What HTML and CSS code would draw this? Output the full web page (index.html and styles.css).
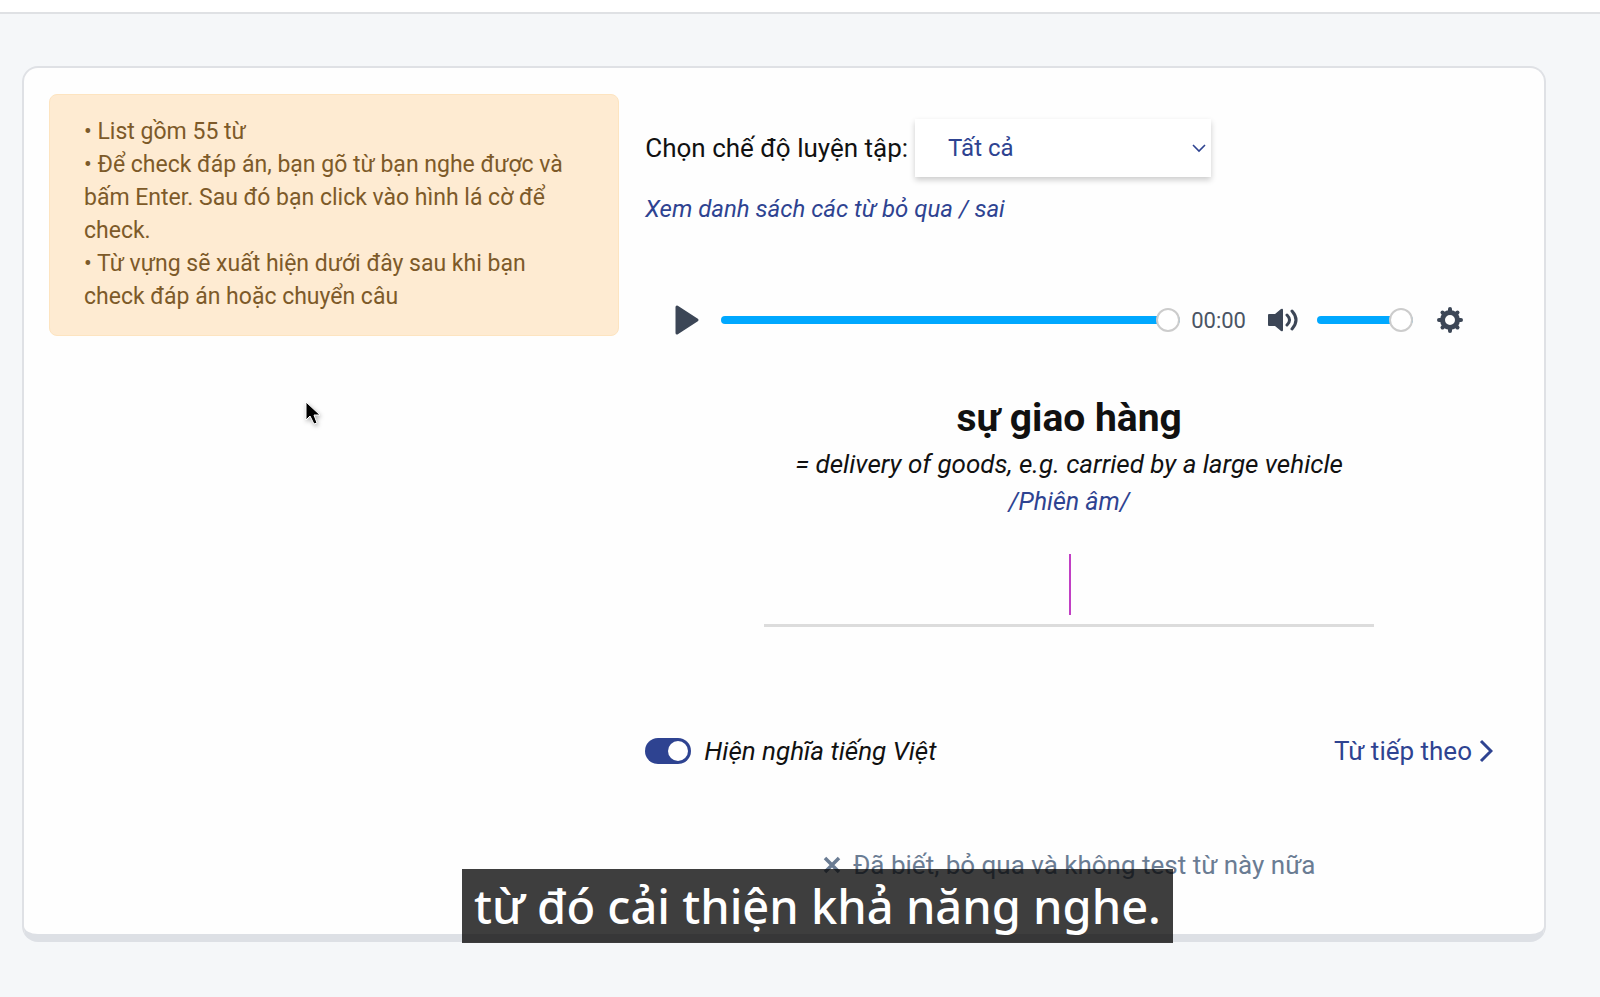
FILE: index.html
```html
<!DOCTYPE html>
<html lang="vi">
<head>
    <meta charset="UTF-8">
    <meta name="viewport" content="width=device-width, initial-scale=1.0">
    <title>Luyện nghe từ vựng</title>
    <link rel="stylesheet" href="styles.css">
</head>
<body>
    <header class="topbar"></header>

    <main class="card">
        <aside class="notes">
            <div>• List gồm 55 từ</div>
            <div>• Để check đáp án, bạn gõ từ bạn nghe được và bấm Enter. Sau đó bạn click vào hình lá cờ để check.</div>
            <div>• Từ vựng sẽ xuất hiện dưới đây sau khi bạn check đáp án hoặc chuyển câu</div>
        </aside>

        <section class="practice">
            <div class="mode">
                <label for="mode">Chọn chế độ luyện tập:</label>
                <div class="select-box">
                    <select id="mode">
                        <option>Tất cả</option>
                    </select>
                    <svg class="select-arrow" width="14" height="9" viewBox="0 0 14 9"><path d="M1 1l6 6 6-6" fill="none" stroke="currentColor" stroke-width="1.6"/></svg>
                </div>
            </div>
            <a class="list-link" href="#">Xem danh sách các từ bỏ qua / sai</a>

            <div class="player">
                <button class="icon-button" type="button" aria-label="Play">
                    <svg width="24" height="30" viewBox="0 0 24 30"><path d="M2 2v26l20-13z" fill="currentColor" stroke="currentColor" stroke-width="3" stroke-linejoin="round"/></svg>
                </button>
                <input class="slider seek" type="range" min="0" max="100" value="100" aria-label="Seek">
                <span class="time">00:00</span>
                <button class="icon-button volume-button" type="button" aria-label="Mute">
                    <svg width="30" height="24" viewBox="0 0 30 24">
                        <path d="M1 6h6l6-5q2-1 2 1v20q0 2-2 1l-6-5H1q-1 0-1-1V7q0-1 1-1z" fill="currentColor"/>
                        <path d="M19 7q5 5 0 10M24 3q8 9 0 18" fill="none" stroke="currentColor" stroke-width="3" stroke-linecap="round"/>
                    </svg>
                </button>
                <input class="slider volume" type="range" min="0" max="100" value="100" aria-label="Volume">
                <button class="icon-button settings" type="button" aria-label="Settings">
                    <svg width="26" height="26" viewBox="0 0 26 26">
                        <path d="M13 2v3M13 21v3M2 13h3M21 13h3M5.5 5.5l2 2M18.5 18.5l2 2M20.5 5.5l-2 2M7.5 18.5l-2 2" stroke="currentColor" stroke-width="4" stroke-linecap="round"/>
                        <circle cx="13" cy="13" r="7.5" fill="none" stroke="currentColor" stroke-width="5"/>
                    </svg>
                </button>
            </div>

            <div class="word">
                <h1>sự giao hàng</h1>
                <p class="meaning">= delivery of goods, e.g. carried by a large vehicle</p>
                <p class="phonetic">/Phiên âm/</p>
            </div>

            <div class="answer">
                <input type="text" aria-label="Đáp án" autocomplete="off">
                <span class="caret"></span>
            </div>

            <div class="controls">
                <label class="toggle">
                    <input type="checkbox" checked>
                    Hiện nghĩa tiếng Việt
                </label>
                <button class="next" type="button">Từ tiếp theo
                    <svg width="14" height="24" viewBox="0 0 14 24"><path d="M2 2l10 10L2 22" fill="none" stroke="currentColor" stroke-width="3"/></svg>
                </button>
            </div>

            <button class="skip" type="button">
                <svg width="18" height="18" viewBox="0 0 18 18"><path d="M2 2l14 14M16 2L2 16" stroke="currentColor" stroke-width="3.5"/></svg>
                Đã biết, bỏ qua và không test từ này nữa
            </button>
        </section>
    </main>

    <div class="subtitle">từ đó cải thiện khả năng nghe.</div>

    <svg class="pointer" width="18" height="28" viewBox="0 0 18 28"><path d="M2 2v18l4-4 4 8 3-1-3-8h6z" fill="#000" stroke="#fff" stroke-width="1"/></svg>
</body>
</html>
```
FILE: styles.css
```css
* {
    box-sizing: border-box;
}

body {
    margin: 0;
    min-height: 100vh;
    background-color: #f5f7f9;
    font-family: Roboto, sans-serif;
    font-size: 26px;
    color: #111;
}

button,
select,
input {
    margin: 0;
    padding: 0;
    border: none;
    background: none;
    font: inherit;
    color: inherit;
}

button {
    cursor: pointer;
}

.topbar {
    height: 14px;
    background: #fff;
    border-bottom: 2px solid #dfe1e4;
}

.card {
    display: grid;
    grid-template-columns: 37fr 55fr;
    gap: 26px;
    align-items: start;
    margin: 52px 54px 0 22px;
    padding: 26px 51px 49px 25px;
    background: #fefefe;
    border: 2px solid #dfe1e5;
    border-bottom: 8px solid #dde0e5;
    border-radius: 16px;
}

.notes {
    padding: 20px 34px 22px;
    background: #feebd2;
    border: 1px solid #fde4c0;
    border-radius: 8px;
    font-size: 23px;
    line-height: 33px;
    color: #7d5a29;
}

.practice {
    display: flex;
    flex-direction: column;
    padding-top: 25px;
}

.mode {
    display: flex;
    align-items: center;
    gap: 7px;
}

.select-box {
    position: relative;
    width: 296px;
    height: 58px;
    background: #fff;
    box-shadow: 0 3px 6px rgba(0, 0, 0, 0.2);
}

.select-box select {
    width: 100%;
    height: 100%;
    padding-left: 33px;
    appearance: none;
    font-size: 24px;
    color: #2e4391;
}

.select-arrow {
    position: absolute;
    right: 5px;
    top: 25px;
    color: #2e4391;
    pointer-events: none;
}

.list-link {
    align-self: flex-start;
    margin-top: 16px;
    font-size: 24px;
    line-height: 32px;
    font-style: italic;
    color: #2e4391;
    text-decoration: none;
}

.player {
    display: flex;
    align-items: center;
    height: 40px;
    margin-top: 75px;
    padding: 0 30px;
    color: #3c4656;
}

.icon-button {
    display: flex;
}

.slider {
    appearance: none;
    min-width: 0;
    height: 24px;
}

.slider::-webkit-slider-runnable-track {
    height: 8px;
    border-radius: 4px;
    background: #00a8ff;
}

.slider::-webkit-slider-thumb {
    appearance: none;
    width: 24px;
    height: 24px;
    margin-top: -8px;
    border: 2px solid #ccc;
    border-radius: 50%;
    background: #fff;
}

.seek {
    flex: 1;
    margin-left: 22px;
}

.time {
    margin-left: 11px;
    font-size: 22px;
    color: #4a5464;
}

.volume-button {
    margin-left: 22px;
}

.volume {
    width: 96px;
    margin-left: 19px;
}

.settings {
    margin-left: 24px;
}

.word {
    margin-top: 54px;
    text-align: center;
}

.word h1 {
    margin: 0;
    font-size: 39px;
    line-height: 48px;
}

.word p {
    margin: 0;
    line-height: 37px;
    font-style: italic;
}

.word .meaning {
    margin-top: 4px;
}

.word .phonetic {
    font-size: 25px;
    color: #2e4391;
}

.answer {
    position: relative;
    width: 72%;
    margin: 27px auto 0;
}

.answer input {
    display: block;
    width: 100%;
    height: 80px;
    border-bottom: 3px solid #dcdcdc;
    outline: none;
    font-size: 48px;
    text-align: center;
    caret-color: #c13fc4;
}

.caret {
    position: absolute;
    left: 50%;
    top: 7px;
    width: 2px;
    height: 61px;
    background: #c13fc4;
}

.controls {
    display: flex;
    justify-content: space-between;
    align-items: center;
    margin-top: 104px;
    line-height: 40px;
}

.toggle {
    display: flex;
    align-items: center;
    gap: 13px;
    font-style: italic;
}

.toggle input {
    display: flex;
    appearance: none;
    width: 46px;
    height: 26px;
    padding: 3px;
    border-radius: 13px;
    background: #d0d4dc;
}

.toggle input:checked {
    justify-content: flex-end;
    background: #2e4391;
}

.toggle input::before {
    content: "";
    width: 20px;
    height: 20px;
    border-radius: 50%;
    background: #fff;
}

.next {
    display: flex;
    align-items: center;
    gap: 7px;
    color: #2e4391;
}

.skip {
    display: flex;
    align-self: center;
    align-items: center;
    gap: 12px;
    margin-top: 74px;
    line-height: 40px;
    color: #6a7c93;
}

.subtitle {
    position: absolute;
    left: 462px;
    top: 869px;
    padding: 0 12px;
    background: rgba(8, 8, 8, 0.78);
    font-family: "Noto Sans", sans-serif;
    font-size: 47px;
    font-weight: 500;
    line-height: 74px;
    color: #fff;
    white-space: nowrap;
}

.pointer {
    position: absolute;
    left: 304px;
    top: 400px;
    filter: drop-shadow(1px 2px 2px rgba(0, 0, 0, 0.3));
}
```
